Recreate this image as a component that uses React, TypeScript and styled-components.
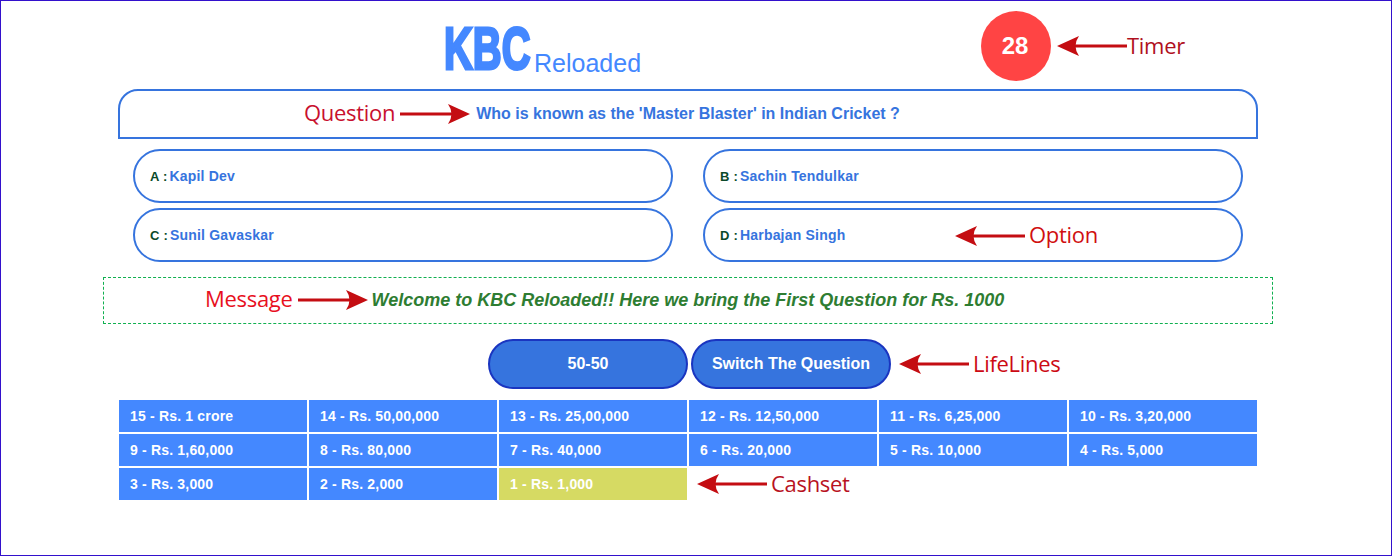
import React from "react";
import styled, { createGlobalStyle } from "styled-components";

const Global = createGlobalStyle`
  html, body { margin: 0; padding: 0; background: #fff; }
  body { font-family: "Liberation Sans", Arial, sans-serif; }
  * { box-sizing: border-box; }
`;

const Frame = styled.div`
  position: relative;
  width: 1392px;
  height: 556px;
  border: 1px solid #3311cc;
  overflow: hidden;
`;

const Wrap = styled.div`
  width: 1170px;
  margin-left: 102px;
  display: flex;
  flex-direction: column;
`;

const Header = styled.header`
  height: 88px;
  padding-top: 10px;
  display: flex;
  align-items: flex-start;
`;

const Title = styled.h1`
  margin: 13px 0 0 341px;
  width: 537px;
  height: 50px;
  display: flex;
  align-items: flex-end;
  color: #4488ff;
  font-weight: 400;
`;

const Kbc = styled.span`
  display: block;
  width: 90px;
  font-size: 60px;
  line-height: 50px;
  font-weight: 700;
  transform-origin: left bottom;
  transform: scaleX(0.665);
  -webkit-text-stroke: 3px #4488ff;
  white-space: nowrap;
`;

const Sub = styled.span`
  font-size: 25px;
  line-height: 28px;
  white-space: nowrap;
  margin-bottom: -3px;
`;

const Timer = styled.div`
  width: 70px;
  height: 70px;
  border-radius: 50%;
  background: #ff4444;
  color: #fff;
  font-size: 24px;
  font-weight: 700;
  padding-right: 2px;
  display: flex;
  align-items: center;
  justify-content: center;
`;

const Question = styled.div`
  margin: 0 15px;
  height: 50px;
  border: 2px solid #3674de;
  border-radius: 20px 20px 0 0;
  color: #3674de;
  font-size: 16px;
  font-weight: 700;
  display: flex;
  align-items: center;
  justify-content: center;
`;

const Options = styled.div`
  margin: 10px 30px 0;
  display: grid;
  grid-template-columns: 540px 540px;
  column-gap: 30px;
  row-gap: 5px;
`;

const Option = styled.div`
  height: 54px;
  padding-left: 15px;
  border: 2px solid #3674de;
  border-radius: 27px;
  font-size: 14px;
  font-weight: 700;
  letter-spacing: 0.2px;
  color: #3674de;
  display: flex;
  align-items: center;
`;

const Letter = styled.span`
  color: #0b4a2a;
  font-size: 13px;
  margin-right: 2px;
`;

const Message = styled.div`
  margin-top: 15px;
  height: 47px;
  border: 1px dashed #10b050;
  color: #2e7d32;
  font-size: 18px;
  font-style: italic;
  font-weight: 700;
  display: flex;
  align-items: center;
  justify-content: center;
`;

const Lifelines = styled.div`
  margin: 15px 0 0 385px;
  display: flex;
  gap: 3px;
`;

const Lifeline = styled.button`
  width: 200px;
  height: 50px;
  border: 2px solid #1a35c0;
  border-radius: 25px;
  background: #3674de;
  color: #fff;
  font-family: inherit;
  font-size: 16px;
  font-weight: 700;
  padding: 0;
`;

const Cashset = styled.div`
  margin: 11px 0 0 16px;
  display: grid;
  grid-template-columns: repeat(6, 188px);
  grid-auto-rows: 32px;
  gap: 2px;
`;

const Cash = styled.div<{ $active?: boolean }>`
  background: ${(p) => (p.$active ? "#d6da63" : "#4488ff")};
  color: #fff;
  font-size: 14px;
  font-weight: 700;
  letter-spacing: 0.18px;
  padding-left: 11px;
  display: flex;
  align-items: center;
`;

const Note = styled.span<{ $x: number; $y: number; $color: string }>`
  position: absolute;
  left: ${(p) => p.$x}px;
  top: ${(p) => p.$y}px;
  height: 30px;
  line-height: 30px;
  font-family: "Open Sans", "Noto Sans", sans-serif;
  font-size: 22px;
  letter-spacing: -0.3px;
  color: ${(p) => p.$color};
  white-space: nowrap;
`;

const ArrowSvg = styled.svg<{ $x: number; $y: number; $flip?: boolean }>`
  position: absolute;
  left: ${(p) => p.$x}px;
  top: ${(p) => p.$y}px;
  width: 70px;
  height: 22px;
  transform: ${(p) => (p.$flip ? "scaleX(-1)" : "none")};
`;

function Arrow({ x, y, flip }: { x: number; y: number; flip?: boolean }) {
  return (
    <ArrowSvg $x={x} $y={y} $flip={flip} viewBox="0 0 70 22">
      <rect x="0" y="9.5" width="55" height="3" fill="#c40d12" />
      <path d="M70 11 L48 1 Q55 11 48 21 Z" fill="#c40d12" />
    </ArrowSvg>
  );
}

const cash = [
  "15 - Rs. 1 crore", "14 - Rs. 50,00,000", "13 - Rs. 25,00,000", "12 - Rs. 12,50,000", "11 - Rs. 6,25,000", "10 - Rs. 3,20,000",
  "9 - Rs. 1,60,000", "8 - Rs. 80,000", "7 - Rs. 40,000", "6 - Rs. 20,000", "5 - Rs. 10,000", "4 - Rs. 5,000",
  "3 - Rs. 3,000", "2 - Rs. 2,000", "1 - Rs. 1,000",
];

const options = [
  ["A", "Kapil Dev"],
  ["B", "Sachin Tendulkar"],
  ["C", "Sunil Gavaskar"],
  ["D", "Harbajan Singh"],
];

export default function App() {
  return (
    <Frame>
      <Global />
      <Wrap>
        <Header>
          <Title>
            <Kbc>KBC</Kbc>
            <Sub>Reloaded</Sub>
          </Title>
          <Timer>28</Timer>
        </Header>
        <Question>Who is known as the 'Master Blaster' in Indian Cricket ?</Question>
        <Options>
          {options.map(([l, t]) => (
            <Option key={l}>
              <Letter>{l} :</Letter>
              {t}
            </Option>
          ))}
        </Options>
        <Message>Welcome to KBC Reloaded!! Here we bring the First Question for Rs. 1000</Message>
        <Lifelines>
          <Lifeline>50-50</Lifeline>
          <Lifeline>Switch The Question</Lifeline>
        </Lifelines>
        <Cashset>
          {cash.map((c, i) => (
            <Cash key={c} $active={i === 14}>{c}</Cash>
          ))}
        </Cashset>
      </Wrap>

      <Arrow x={1056} y={34} flip />
      <Note $x={1126} $y={29} $color="#b0101e">Timer</Note>
      <Note $x={303} $y={96} $color="#c8102e">Question</Note>
      <Arrow x={399} y={102} />
      <Arrow x={954} y={224} flip />
      <Note $x={1028} $y={218} $color="#d01010">Option</Note>
      <Note $x={204} $y={282} $color="#e8101e">Message</Note>
      <Arrow x={297} y={288} />
      <Arrow x={898} y={352} flip />
      <Note $x={972} $y={347} $color="#cc0a14">LifeLines</Note>
      <Arrow x={696} y={472} flip />
      <Note $x={770} $y={467} $color="#b81222">Cashset</Note>
    </Frame>
  );
}
